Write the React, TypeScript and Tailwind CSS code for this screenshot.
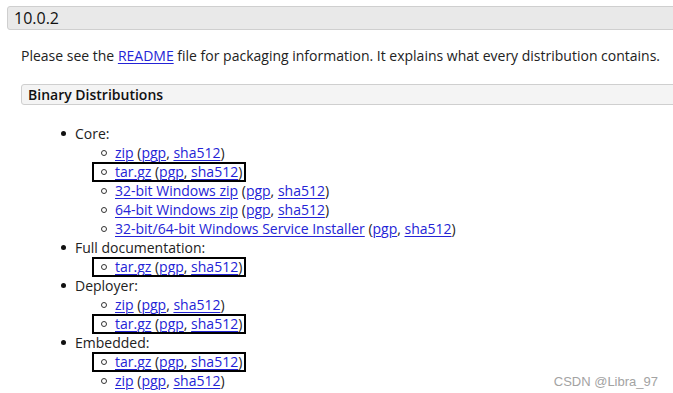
import React from "react";

const font = { fontFamily: '"Open Sans", "Noto Sans", sans-serif' };

function A({ children }: { children: React.ReactNode }) {
  return <a href="#" className="text-[#2424d6] underline underline-offset-[2px] decoration-1">{children}</a>;
}

function Sigs() {
  return (
    <>
      {" ("}
      <A>pgp</A>, <A>sha512</A>)
    </>
  );
}

function Outer({ children }: { children: React.ReactNode }) {
  return (
    <div className="flex h-[19px] items-center pl-[40px]">
      <span className="flex w-[14px] items-center">
        <span className="block h-[5px] w-[5px] rounded-full bg-[#111]" />
      </span>
      <span className="whitespace-nowrap">{children}</span>
    </div>
  );
}

function Inner({ children, boxed = false }: { children: React.ReactNode; boxed?: boolean }) {
  return (
    <div className="flex h-[19px] items-center pl-[73px]">
      <span
        className={
          "flex h-[16px] items-center whitespace-nowrap pl-[7px] pr-[2px] " +
          (boxed ? "outline-2 outline-solid outline-black" : "")
        }
      >
        <span className="mr-[8px] block h-[6px] w-[6px] rounded-full border border-[#333]" />
        <span>{children}</span>
      </span>
    </div>
  );
}

export default function App() {
  return (
    <div className="relative h-[393px] w-[673px] overflow-hidden bg-white text-[14px] text-[#222]" style={font}>
      <div className="pl-[7px] pt-[6px]">
        <div className="flex h-[24px] w-[700px] items-center rounded-[3px] border border-[#cfcfcf] bg-[#e9e9e9] pl-[6px] text-[16px] font-medium text-[#111]">
          10.0.2
        </div>
        <div className="pl-[14px]">
          <p className="mt-[16px] flex h-[19px] items-center whitespace-nowrap">
            Please see the&nbsp;<A>README</A>&nbsp;file for packaging information. It explains what every distribution contains.
          </p>
          <div className="mt-[19px] flex h-[21px] w-[700px] items-center rounded-[3px] border border-[#cfcfcf] bg-[#f4f4f4] pl-[6px] font-semibold text-[#111]">
            Binary Distributions
          </div>
          <div className="mt-[19px]">
            <Outer>Core:</Outer>
            <Inner>
              <A>zip</A>
              <Sigs />
            </Inner>
            <Inner boxed>
              <A>tar.gz</A>
              <Sigs />
            </Inner>
            <Inner>
              <A>32-bit Windows zip</A>
              <Sigs />
            </Inner>
            <Inner>
              <A>64-bit Windows zip</A>
              <Sigs />
            </Inner>
            <Inner>
              <A>32-bit/64-bit Windows Service Installer</A>
              <Sigs />
            </Inner>
            <Outer>Full documentation:</Outer>
            <Inner boxed>
              <A>tar.gz</A>
              <Sigs />
            </Inner>
            <Outer>Deployer:</Outer>
            <Inner>
              <A>zip</A>
              <Sigs />
            </Inner>
            <Inner boxed>
              <A>tar.gz</A>
              <Sigs />
            </Inner>
            <Outer>Embedded:</Outer>
            <Inner boxed>
              <A>tar.gz</A>
              <Sigs />
            </Inner>
            <Inner>
              <A>zip</A>
              <Sigs />
            </Inner>
          </div>
        </div>
      </div>
      <div
        className="absolute right-[15px] top-[372px] text-[13px] text-[#a3a3a3]"
        style={{ fontFamily: '"Liberation Sans", Arial, sans-serif' }}
      >
        CSDN @Libra_97
      </div>
    </div>
  );
}
